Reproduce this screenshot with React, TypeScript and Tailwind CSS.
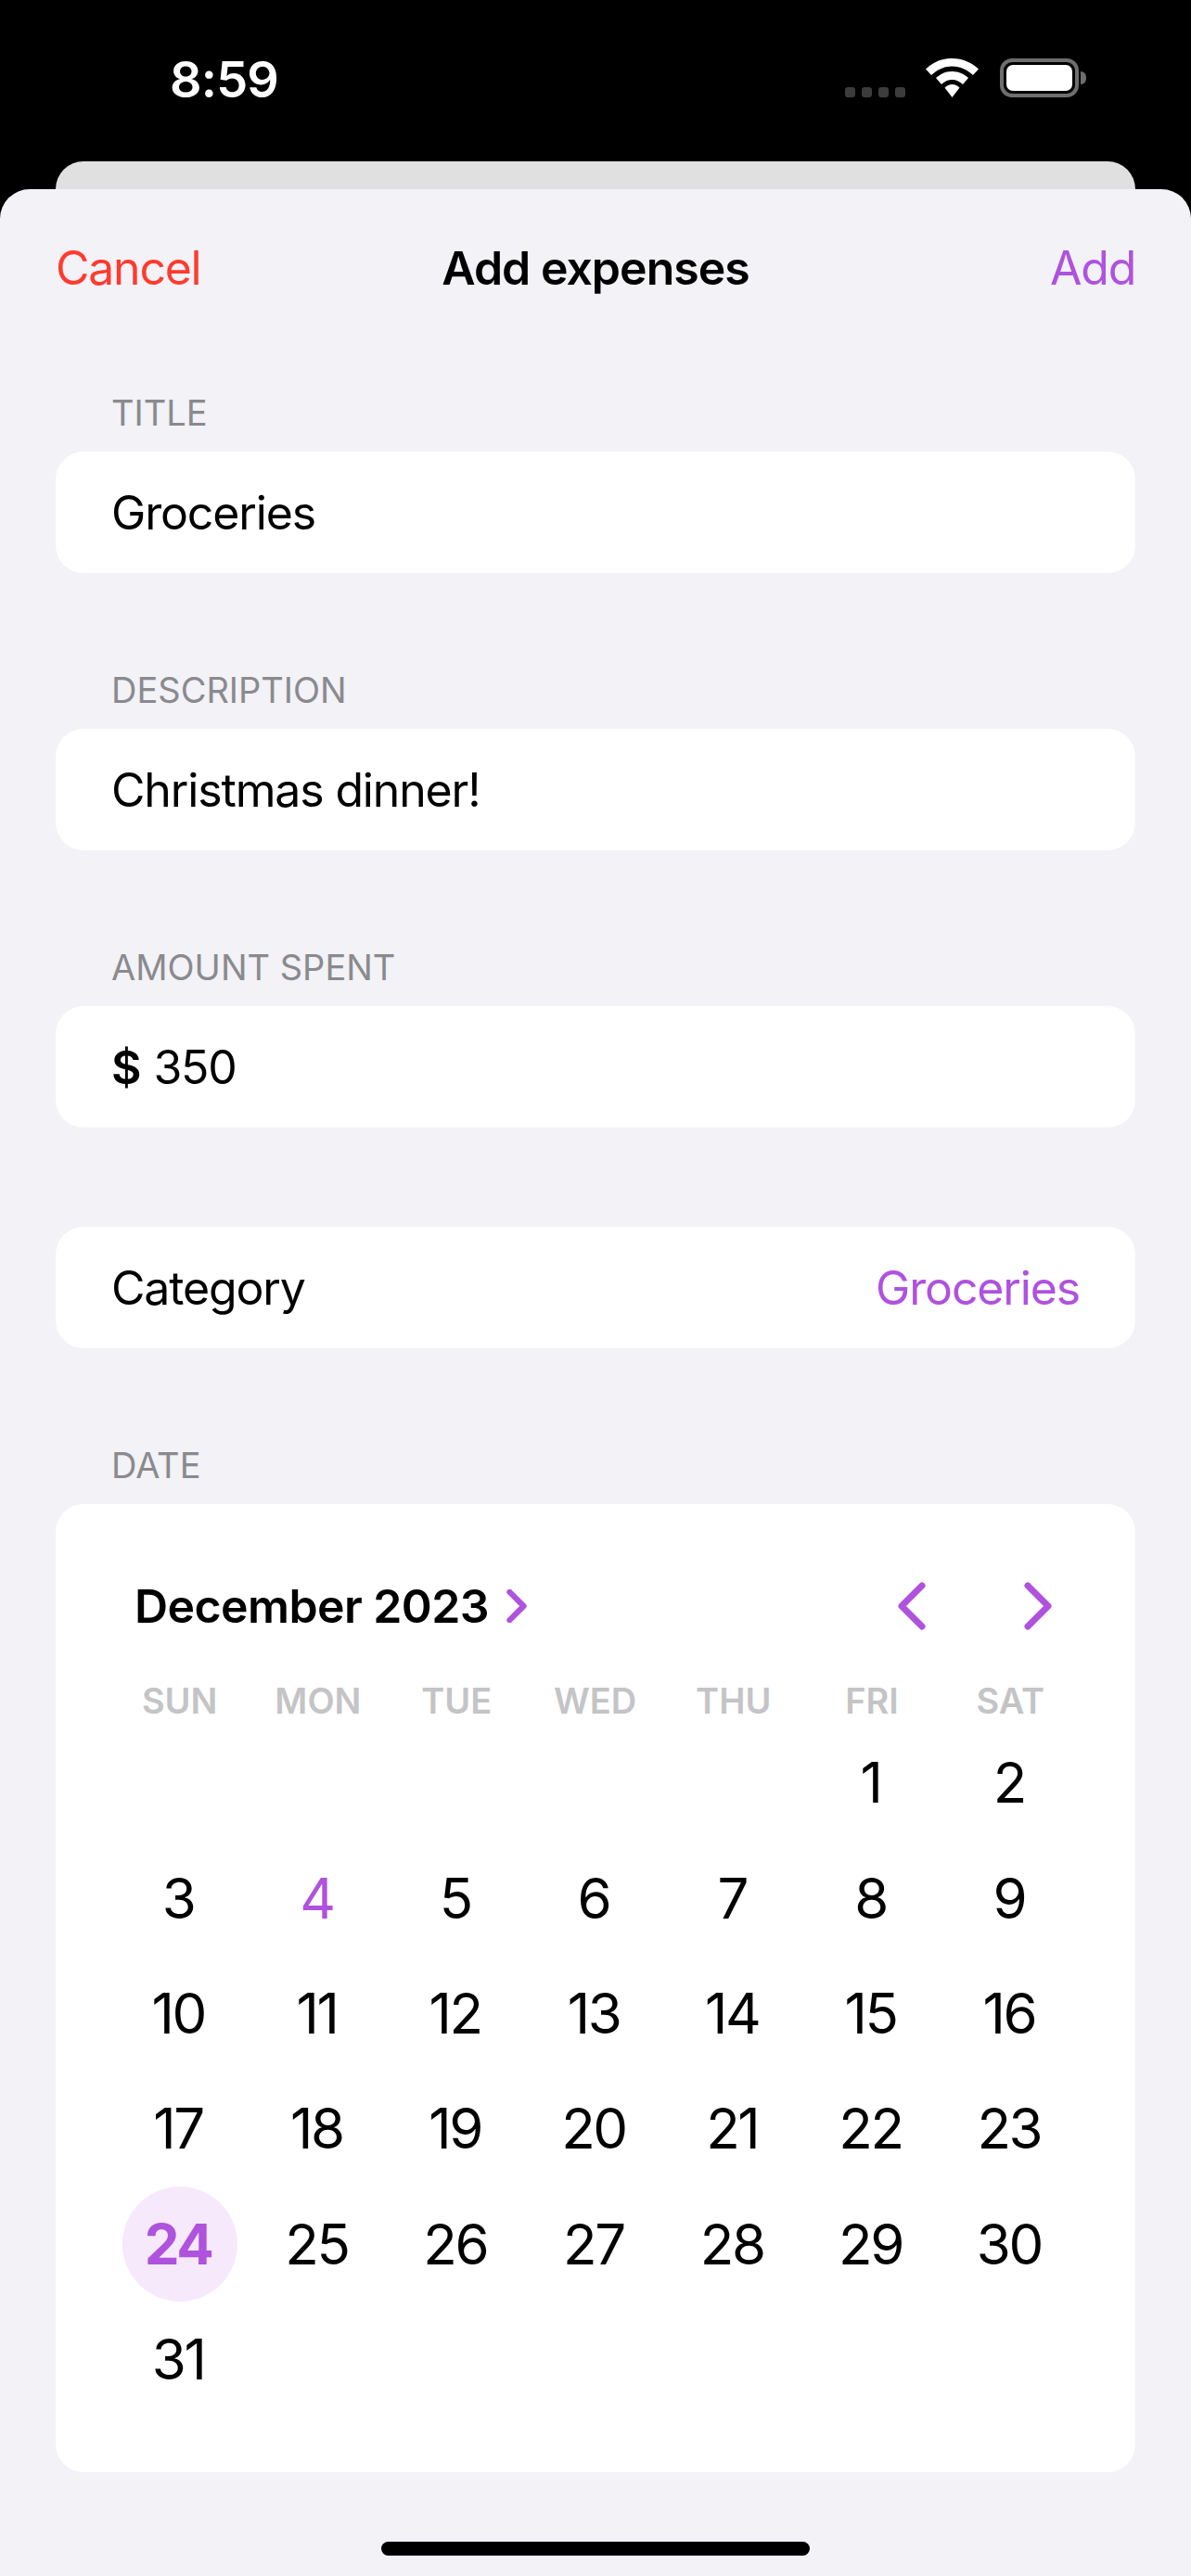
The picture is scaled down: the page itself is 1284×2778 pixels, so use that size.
const WEEKDAYS = ['SUN', 'MON', 'TUE', 'WED', 'THU', 'FRI', 'SAT'];
const DAYS = Array.from({ length: 31 }, (_, i) => i + 1);

function Chevron({ dir, className, weight = 7 }: { dir: 'left' | 'right'; className: string; weight?: number }) {
  return (
    <svg viewBox="0 0 32 52" className={className} fill="none" stroke="#af52de" strokeWidth={weight} strokeLinecap="round" strokeLinejoin="round">
      <path d={dir === 'left' ? 'M27 4 L5 26 L27 48' : 'M5 4 L27 26 L5 48'} />
    </svg>
  );
}

function StatusIcons() {
  return (
    <div className="flex items-end">
      <div className="flex gap-[7px]">
        {[0, 1, 2, 3].map((i) => (
          <div key={i} className="h-[11px] w-[11px] rounded-[3px] bg-[#3c3c3c]" />
        ))}
      </div>
      <svg viewBox="0 0 57 42" className="ml-[22px] h-[42px] w-[57px]" fill="#fff">
        <path d="M28.5 0C17 0 7.5 4.5 0 11.5L6 18C12 12.5 19.5 8.5 28.5 8.5C37.5 8.5 45 12.5 51 18L57 11.5C49.5 4.5 40 0 28.5 0Z" />
        <path d="M28.5 14C21 14 15.5 17 11 21L17 28C20 25 24 23 28.5 23C33 23 37 25 40 28L46 21C41.5 17 36 14 28.5 14Z" />
        <path d="M28.5 28C25 28 23 29.5 20.5 31.5L28.5 42L36.5 31.5C34 29.5 32 28 28.5 28Z" />
      </svg>
      <div className="ml-[23px] flex items-center">
        <div className="h-[42px] w-[85px] rounded-[13px] border-[4px] border-[#6e6e6e] p-[3px]">
          <div className="h-full w-full rounded-[7px] bg-white" />
        </div>
        <div className="ml-[2px] h-[14px] w-[6px] rounded-r-full bg-[#6e6e6e]" />
      </div>
    </div>
  );
}

function Field({ label, children }: { label: string; children: React.ReactNode }) {
  return (
    <div>
      <div className="mb-[19px] pl-[60px] text-[38px] leading-[46px] text-[#8a8a8e]">{label}</div>
      <div className="flex h-[131px] items-center rounded-[30px] bg-white px-[60px] pt-[2px] text-[50px] tracking-[-0.023em] text-black">
        {children}
      </div>
    </div>
  );
}

export default function App() {
  return (
    <div
      className="flex h-[2778px] w-[1284px] flex-col overflow-hidden bg-black"
      style={{ fontFamily: 'Inter, "Noto Sans", sans-serif' }}
    >
      <div className="flex h-[174px] items-start justify-between pl-[183px] pr-[113px] pt-[63px]">
        <div className="text-[54px] font-semibold leading-[46px] tracking-[-0.015em] text-white">8:59</div>
        <StatusIcons />
      </div>
      <div className="mx-[60px] h-[30px] rounded-t-[30px] bg-[#e0e0e0]" />

      <div className="flex flex-1 flex-col rounded-t-[32px] bg-[#f2f2f7] px-[60px]">
        <div className="grid h-[170px] shrink-0 grid-cols-[1fr_auto_1fr] items-center text-[50px] tracking-[-0.025em]">
          <div className="text-[#ff3b30]">Cancel</div>
          <div className="font-semibold tracking-[-0.02em] text-black">Add expenses</div>
          <div className="text-right text-[#af52de]">Add</div>
        </div>

        <div className="flex flex-col gap-[103px] pt-[48px]">
          <Field label="TITLE">Groceries</Field>
          <Field label="DESCRIPTION">Christmas dinner!</Field>
          <Field label="AMOUNT SPENT">
            <span className="font-semibold">$</span>
            <span className="ml-[14px]">350</span>
          </Field>
        </div>

        <div className="mb-[103px] mt-[107px] flex h-[131px] items-center justify-between rounded-[30px] bg-white px-[60px] pt-[2px] text-[50px] tracking-[-0.023em]">
          <span className="text-black">Category</span>
          <span className="text-[#af52de]">Groceries</span>
        </div>

        <div className="mb-[19px] pl-[60px] text-[38px] leading-[46px] text-[#8a8a8e]">DATE</div>
        <div className="h-[1044px] rounded-[30px] bg-white pl-[59px] pr-[60px] pt-[84px]">
          <div className="flex h-[52px] items-center justify-between pl-[26px] pr-[29px]">
            <div className="flex items-center">
              <span className="text-[50px] font-semibold tracking-[-0.012em] text-black">December 2023</span>
              <Chevron dir="right" className="ml-[19px] h-[36px] w-[22px]" weight={9} />
            </div>
            <div className="flex items-center gap-[104px]">
              <Chevron dir="left" className="h-[52px] w-[32px]" />
              <Chevron dir="right" className="h-[52px] w-[32px]" />
            </div>
          </div>

          <div className="mt-[53px] grid grid-cols-7">
            {WEEKDAYS.map((d) => (
              <div key={d} className="text-center text-[38px] font-semibold leading-[46px] text-[#c4c4c6]">
                {d}
              </div>
            ))}
          </div>

          <div className="mt-[3px] grid grid-cols-7 auto-rows-[124.4px]">
            {DAYS.map((d) => (
              <div key={d} className={`flex items-center justify-center ${d === 1 ? 'col-start-6' : ''}`}>
                <div
                  className={`flex h-[124px] w-[124px] items-center justify-center rounded-full pr-[3px] text-[60px] tracking-[-0.04em] ${
                    d === 24 ? 'bg-[#f5e9fb] font-bold text-[#af52de]' : d === 4 ? 'text-[#af52de]' : 'text-black'
                  }`}
                >
                  {d}
                </div>
              </div>
            ))}
          </div>
        </div>

        <div className="mt-[75px] h-[15px] w-[462px] self-center rounded-full bg-black" />
      </div>
    </div>
  );
}
